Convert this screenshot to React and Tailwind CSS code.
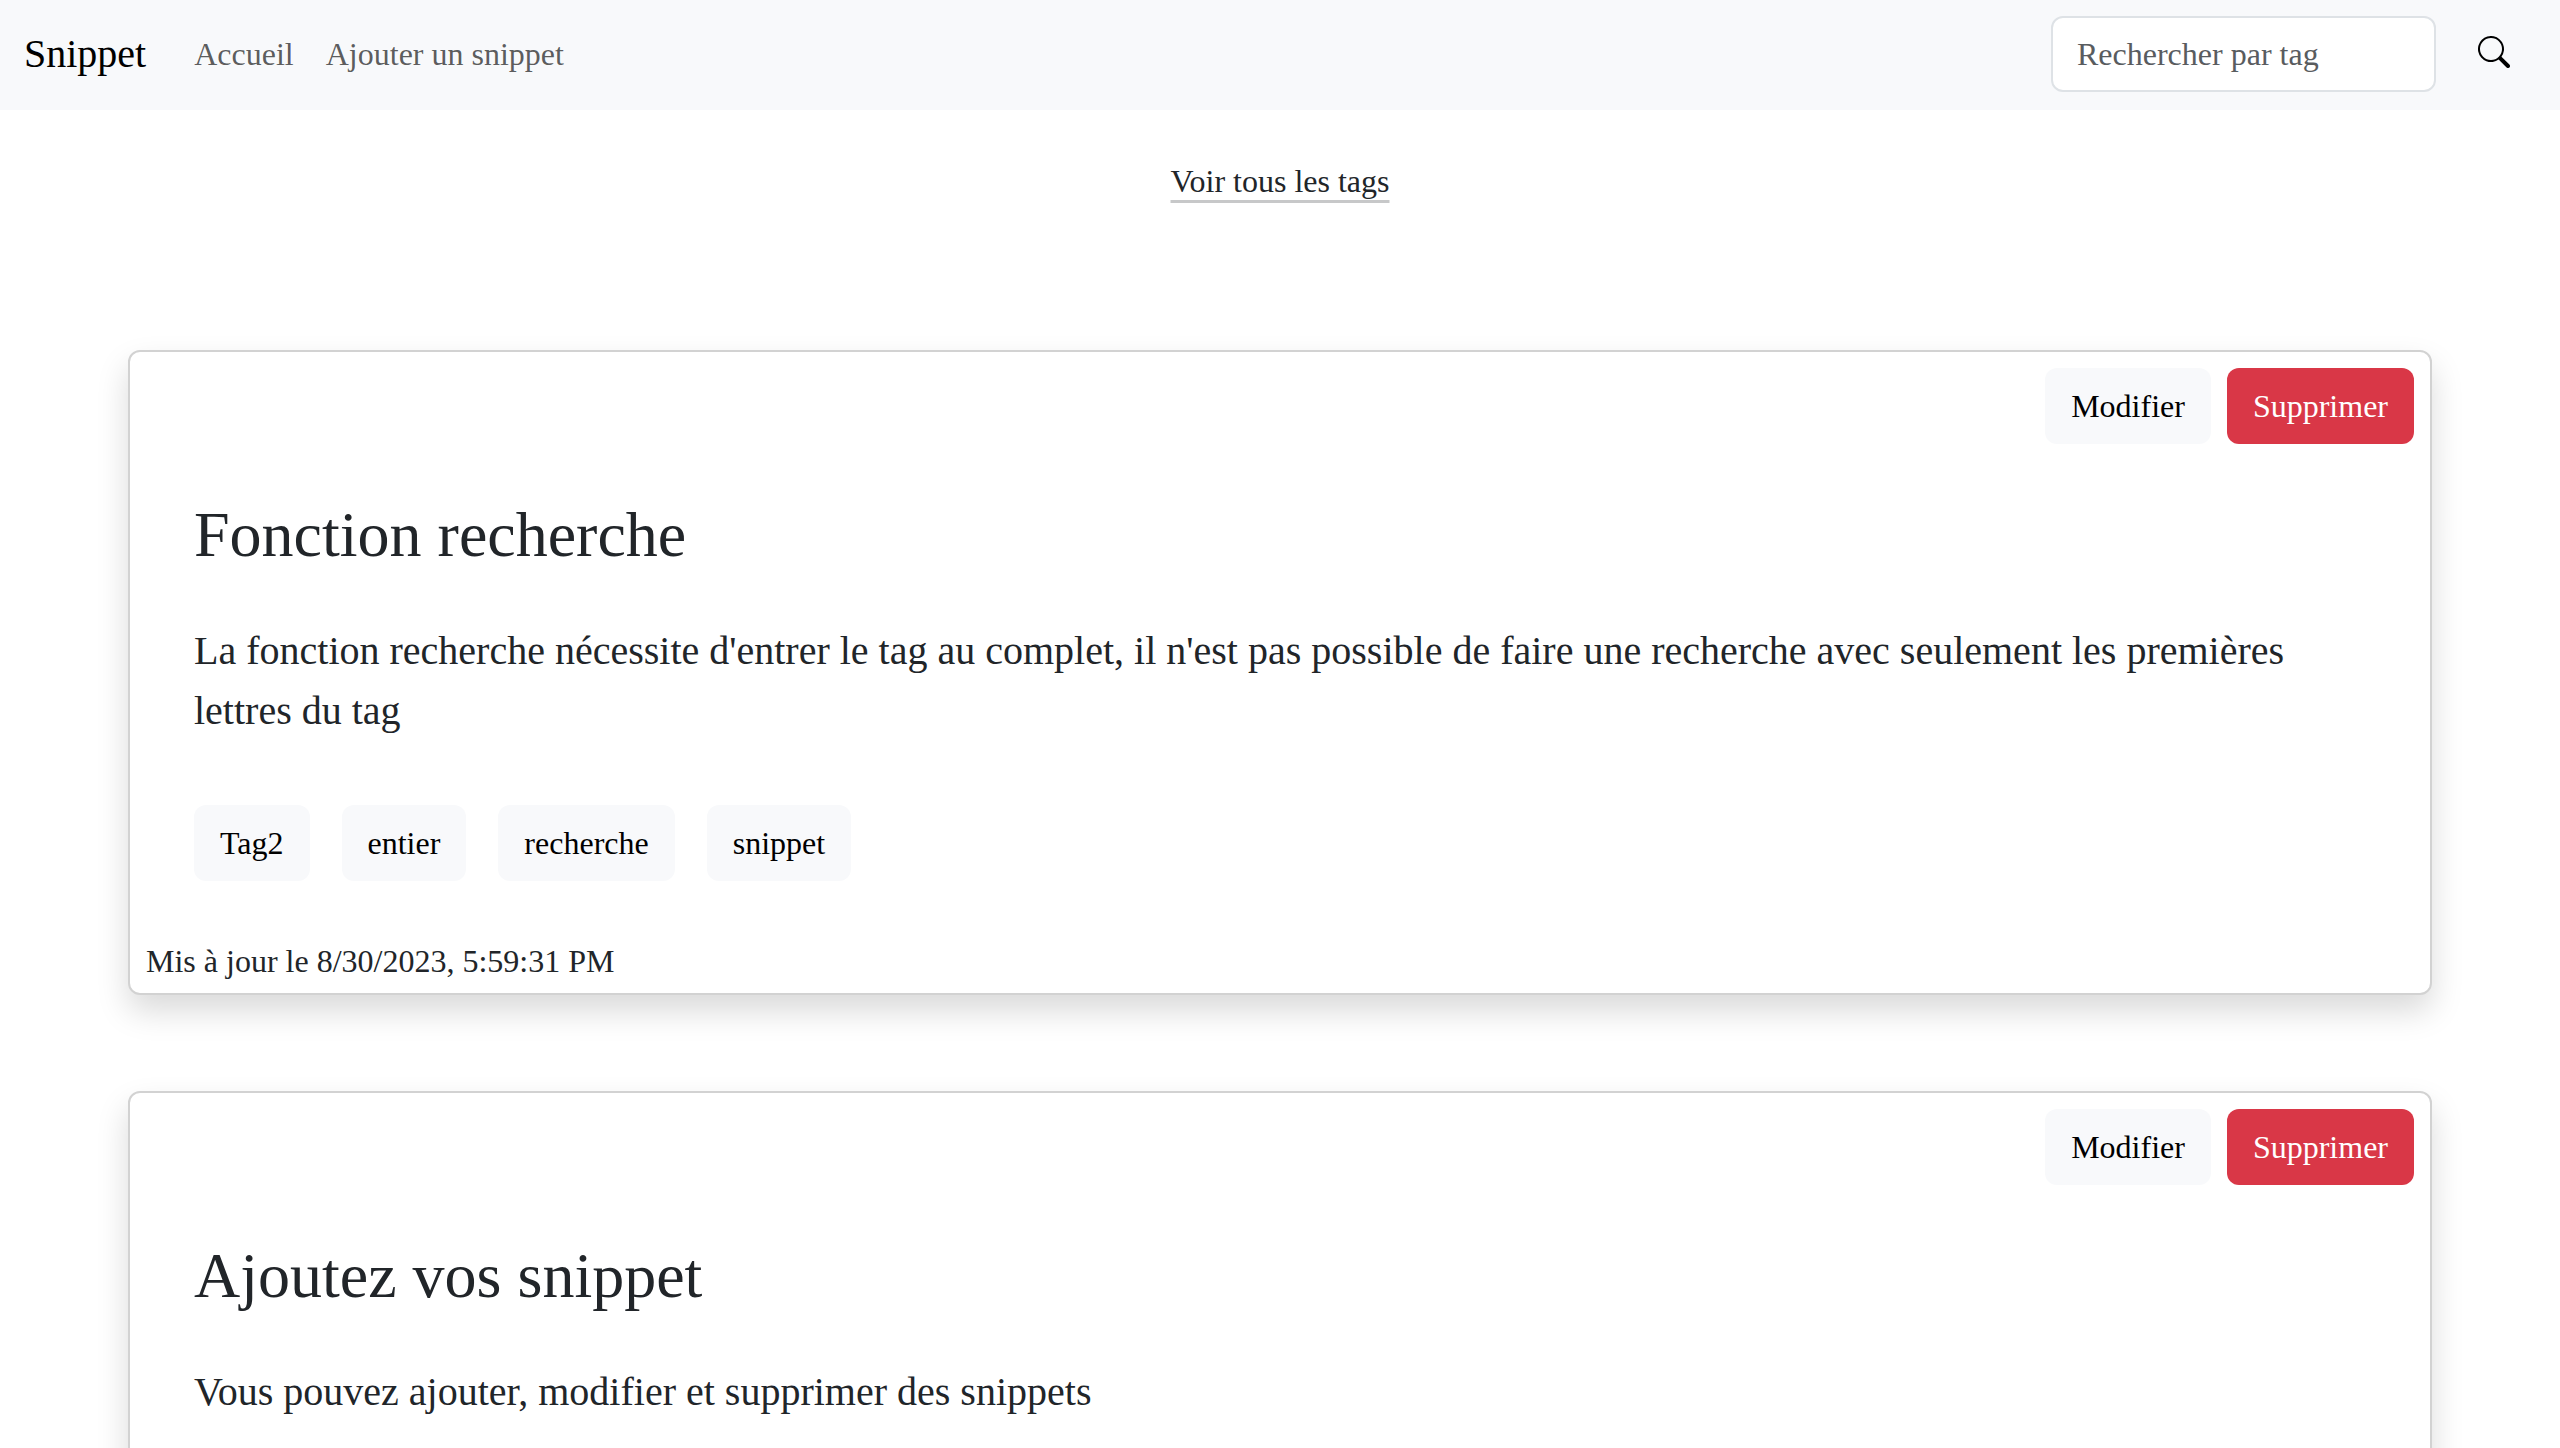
import React from "react";
import { BsSearch } from "react-icons/bs";

const snippets = [
  {
    title: "Fonction recherche",
    text: "La fonction recherche nécessite d'entrer le tag au complet, il n'est pas possible de faire une recherche avec seulement les premières lettres du tag",
    tags: ["Tag2", "entier", "recherche", "snippet"],
    updated: "Mis à jour le 8/30/2023, 5:59:31 PM",
  },
  {
    title: "Ajoutez vos snippet",
    text: "Vous pouvez ajouter, modifier et supprimer des snippets",
    tags: [],
    updated: null,
  },
];

function Button({ variant = "light", children }) {
  const colors =
    variant === "danger" ? "bg-[#d93747] text-white" : "bg-[#f8f9fb] text-black";
  return (
    <button type="button" className={`rounded-xl px-[26px] py-[14px] ${colors}`}>
      {children}
    </button>
  );
}

function Navbar() {
  return (
    <header className="flex items-center bg-[#f8f9fb] px-6 pt-4 pb-[18px]">
      <a href="#accueil" className="mr-8 text-[40px] leading-[60px] text-black">
        Snippet
      </a>
      <nav className="flex text-black/65">
        <a href="#accueil" className="px-4">
          Accueil
        </a>
        <a href="#ajouter" className="px-4">
          Ajouter un snippet
        </a>
      </nav>
      <form className="ml-auto flex gap-4" onSubmit={(e) => e.preventDefault()}>
        <input
          type="search"
          aria-label="Rechercher par tag"
          placeholder="Rechercher par tag"
          className="h-[76px] w-[385px] rounded-xl border-2 border-[#dee2e6] bg-white px-6 text-[#212529] placeholder:text-[#595c5f]"
        />
        <button type="submit" aria-label="Rechercher" className="h-[72px] px-[26px] text-black">
          <BsSearch className="size-8" />
        </button>
      </form>
    </header>
  );
}

function SnippetCard({ title, text, tags, updated }) {
  return (
    <article className="rounded-xl border-2 border-[#d2d2d2] bg-white shadow-[0_16px_32px_rgba(0,0,0,0.15)]">
      <div className="flex justify-end gap-4 px-4 pt-4">
        <Button>Modifier</Button>
        <Button variant="danger">Supprimer</Button>
      </div>
      <div className="px-16 pt-[52px] pb-14">
        <h2 className="text-[64px] leading-[77px]">{title}</h2>
        <p className="mt-12 text-[40px] leading-[60px]">{text}</p>
        {tags.length > 0 && (
          <div className="mt-16 flex flex-wrap gap-8">
            {tags.map((tag) => (
              <Button key={tag}>{tag}</Button>
            ))}
          </div>
        )}
      </div>
      {updated && <p className="px-4 pb-2">{updated}</p>}
    </article>
  );
}

export default function App() {
  return (
    <div className="min-h-screen bg-white font-['Liberation_Serif',serif] text-[32px] leading-[48px] text-[#212529] [font-variant-ligatures:common-ligatures_discretionary-ligatures] [text-rendering:optimizeLegibility]">
      <Navbar />
      <main className="px-[5%] pb-24">
        <div className="pt-[47px] pb-[145px] text-center">
          <a
            href="#tags"
            className="underline decoration-[#212529]/25 decoration-[3px] underline-offset-8 [text-decoration-skip-ink:none]"
          >
            Voir tous les tags
          </a>
        </div>
        <div className="flex flex-col gap-24">
          {snippets.map((s) => (
            <SnippetCard key={s.title} {...s} />
          ))}
        </div>
      </main>
    </div>
  );
}
